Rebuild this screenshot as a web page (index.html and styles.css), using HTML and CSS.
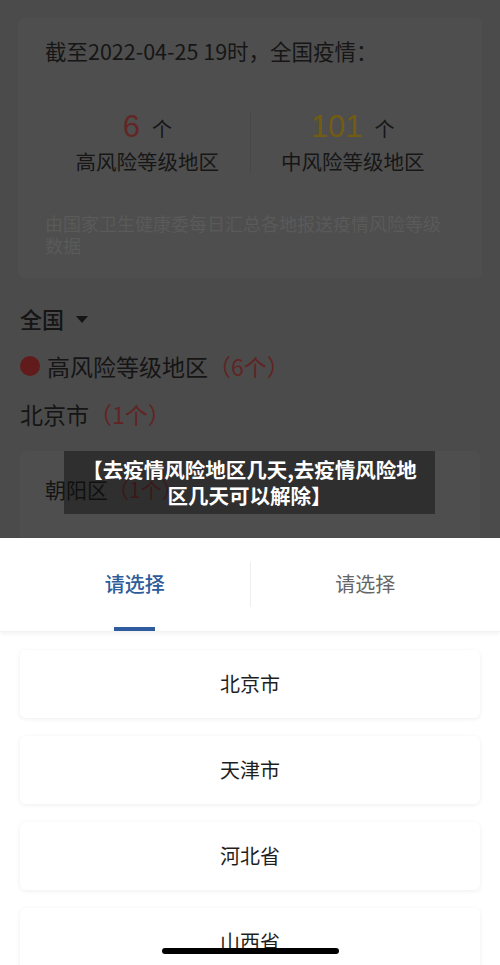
FILE: index.html
```html
<!DOCTYPE html>
<html lang="zh-CN">
<head>
  <meta charset="UTF-8" />
  <title>疫情风险地区</title>
  <link rel="stylesheet" href="styles.css">
</head>
<body>

<div class="page">
  <div class="dim">
    <div class="summary">
      <div class="summary-title">截至2022-04-25 19时，全国疫情：</div>
      <div class="stats">
        <div class="stat">
          <div class="stat-num"><span class="num high">6</span><span class="unit">个</span></div>
          <div class="stat-label">高风险等级地区</div>
        </div>
        <div class="stat-divider"></div>
        <div class="stat">
          <div class="stat-num"><span class="num mid">101</span><span class="unit">个</span></div>
          <div class="stat-label">中风险等级地区</div>
        </div>
      </div>
      <div class="summary-note">由国家卫生健康委每日汇总各地报送疫情风险等级数据</div>
    </div>

    <div class="region-select">全国 <span class="caret"></span></div>
    <div class="level"><span class="dot"></span>高风险等级地区<span class="count">（6个）</span></div>
    <div class="city">北京市<span class="count">（1个）</span></div>
    <div class="district-card">
      <div class="district">朝阳区<span class="count">（1个）</span></div>
    </div>

    <div class="caption">【去疫情风险地区几天,去疫情风险地区几天可以解除】</div>
  </div>

  <div class="sheet">
    <div class="tabs">
      <div class="tab active">请选择</div>
      <div class="tab-divider"></div>
      <div class="tab">请选择</div>
    </div>
    <div class="options">
      <div class="option">北京市</div>
      <div class="option">天津市</div>
      <div class="option">河北省</div>
      <div class="option">山西省</div>
    </div>
    <div class="home-bar"></div>
  </div>
</div>

</body>
</html>
```

FILE: styles.css
```css
* {
  box-sizing: border-box;
}
html, body {
  margin: 0;
  padding: 0;
}
body {
  font-family: "Noto Sans CJK SC", "Noto Sans", sans-serif;
  width: 500px;
  height: 965px;
  overflow: hidden;
  background: #fff;
}
.page {
  position: relative;
  height: 965px;
}
.dim {
  position: relative;
  height: 538px;
  background: #4b4b4b;
  padding: 18px 18px 0;
  overflow: hidden;
}
.summary {
  background: #4e4e4e;
  border-radius: 6px;
  height: 260px;
  padding: 18px 27px 0;
}
.summary-title {
  font-size: 21.5px;
  line-height: 30px;
  color: #161616;
}
.stats {
  display: flex;
  align-items: center;
  margin-top: 44px;
}
.stat {
  flex: 1;
  text-align: center;
}
.stat-num {
  height: 34px;
  line-height: 34px;
}
.num {
  font-family: "Liberation Sans", sans-serif;
  font-size: 31px;
}
.num.high {
  color: #622626;
}
.num.mid {
  color: #725c14;
}
.unit {
  font-size: 20px;
  color: #161616;
  margin-left: 12px;
}
.stat-label {
  font-size: 20.5px;
  line-height: 30px;
  color: #161616;
  margin-top: 2px;
}
.stat-divider {
  width: 1px;
  height: 62px;
  background: #474747;
}
.summary-note {
  margin-top: 36px;
  font-size: 18px;
  line-height: 22px;
  color: #5a5a5a;
}
.region-select {
  margin-top: 22px;
  margin-left: 2px;
  font-size: 22px;
  line-height: 36px;
  color: #151515;
  font-weight: 500;
  display: flex;
  align-items: center;
}
.caret {
  display: inline-block;
  width: 0;
  height: 0;
  border-left: 6px solid transparent;
  border-right: 6px solid transparent;
  border-top: 7px solid #151515;
  margin-left: 12px;
  margin-top: 2px;
}
.level {
  margin-top: 13px;
  margin-left: 2px;
  font-size: 23px;
  line-height: 34px;
  color: #151515;
  display: flex;
  align-items: center;
}
.dot {
  width: 20px;
  height: 20px;
  border-radius: 50%;
  background: #621b1b;
  margin-right: 7px;
}
.count {
  color: #622323;
}
.city {
  margin-top: 14px;
  margin-left: 2px;
  font-size: 23px;
  line-height: 34px;
  color: #151515;
}
.district-card {
  margin-top: 20px;
  margin-left: 2px;
  margin-right: 2px;
  height: 120px;
  background: #4e4e4e;
  border-radius: 6px;
  padding: 23px 25px;
}
.district {
  font-size: 21px;
  line-height: 30px;
  color: #151515;
}
.caption {
  position: absolute;
  left: 64px;
  top: 451px;
  width: 371px;
  height: 63px;
  background: rgba(10, 10, 10, 0.45);
  color: #fff;
  font-size: 20.5px;
  font-weight: bold;
  line-height: 26px;
  text-align: center;
  padding: 5px 12px;
}
.sheet {
  background: #fff;
  height: 427px;
  position: relative;
}
.tabs {
  display: flex;
  align-items: center;
  height: 94px;
  padding: 0 20px;
  position: relative;
  box-shadow: 0 2px 4px rgba(0, 0, 0, 0.05);
  border-bottom: 1px solid #f2f2f2;
}
.tab {
  flex: 1;
  text-align: center;
  font-size: 20px;
  color: #666;
  padding-bottom: 3px;
}
.tab.active {
  color: #2d5b9b;
  font-weight: 500;
  position: relative;
  height: 94px;
  line-height: 91px;
  padding-bottom: 0;
}
.tab.active::after {
  content: "";
  position: absolute;
  left: calc(50% - 21px);
  bottom: 1px;
  width: 41px;
  height: 4px;
  background: #2f5c9e;
}
.tab-divider {
  width: 1px;
  height: 45px;
  background: #eee;
}
.options {
  padding: 18px 20px 0;
  display: flex;
  flex-direction: column;
  gap: 18px;
}
.option {
  height: 68px;
  line-height: 68px;
  text-align: center;
  font-size: 20px;
  color: #1e1e1e;
  background: #fff;
  border-radius: 6px;
  box-shadow: 0 1px 5px rgba(0, 0, 0, 0.07);
}
.home-bar {
  position: absolute;
  left: 162px;
  top: 410px;
  width: 177px;
  height: 6px;
  border-radius: 3px;
  background: #000;
}
```
